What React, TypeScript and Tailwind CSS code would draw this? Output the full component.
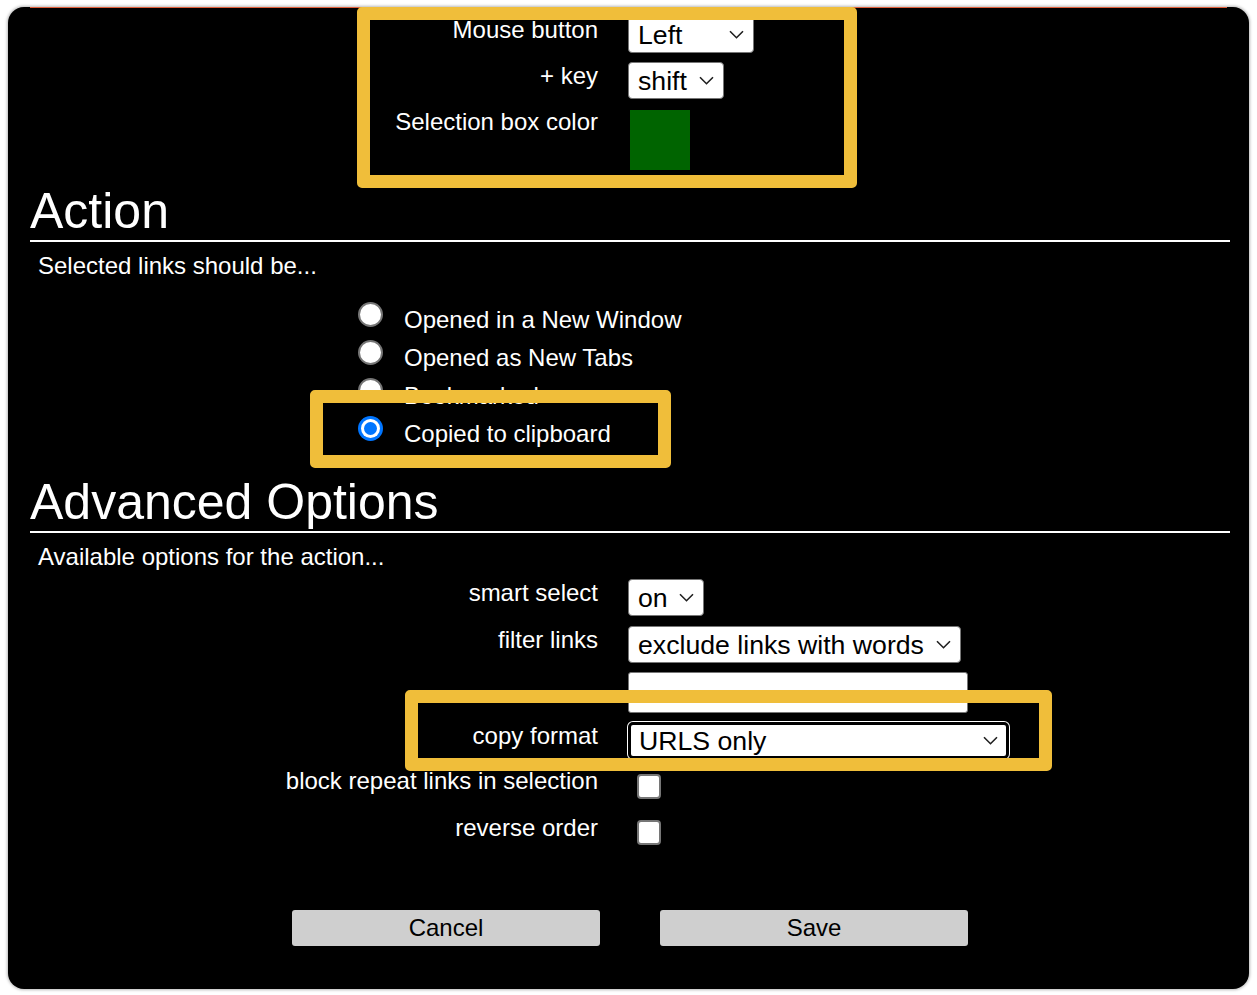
import React from "react";

// options page, dark theme, with the yellow callout boxes drawn over it

function Chevron() {
  return (
    <svg width="15" height="9" viewBox="0 0 15 9" fill="none" className="shrink-0">
      <path d="M1 1.2l6.5 6.5 6.5-6.5" stroke="#1f1f1f" strokeWidth="1.6" />
    </svg>
  );
}

function Select({
  value,
  className,
  focused = false,
}: {
  value: string;
  className: string;
  focused?: boolean;
}) {
  if (focused) {
    return (
      <div
        className={`flex h-[37px] items-center justify-between rounded-[5px] border-[3px] border-black bg-white pl-[8px] pr-[8px] text-[26.67px] leading-normal text-black ring-1 ring-white ${className}`}
      >
        <span>{value}</span>
        <Chevron />
      </div>
    );
  }
  return (
    <div
      className={`flex h-[37px] items-center justify-between gap-[6px] rounded-[4px] border border-[#767676] bg-white pl-[9px] pr-[9px] text-[26.67px] leading-normal text-black ${className}`}
    >
      <span className="whitespace-nowrap">{value}</span>
      <Chevron />
    </div>
  );
}

function Row({
  label,
  height,
  children,
}: {
  label: string;
  height: string;
  children: React.ReactNode;
}) {
  return (
    <div className={`flex items-start gap-[30px] ${height}`}>
      <div className="w-[568px] whitespace-nowrap text-right text-[24px] leading-[28px]">
        {label}
      </div>
      {children}
    </div>
  );
}

function Radio({ checked }: { checked: boolean }) {
  if (checked) {
    return (
      <span className="flex h-[25px] w-[25px] shrink-0 items-center justify-center rounded-full bg-[#0075ff]">
        <span className="flex h-[19px] w-[19px] items-center justify-center rounded-full bg-white">
          <span className="h-[13px] w-[13px] rounded-full bg-[#0075ff]" />
        </span>
      </span>
    );
  }
  return (
    <span className="block h-[25px] w-[25px] shrink-0 rounded-full border-2 border-[#767676] bg-white" />
  );
}

function Checkbox({ top }: { top: string }) {
  return (
    <span
      className={`ml-[9px] block h-[25px] w-[24px] rounded-[4px] border-2 border-[#767676] bg-white ${top}`}
    />
  );
}

const actions = [
  { label: "Opened in a New Window", checked: false },
  { label: "Opened as New Tabs", checked: false },
  { label: "Bookmarked", checked: false },
  { label: "Copied to clipboard", checked: true },
];

export default function App() {
  return (
    <div className="min-h-screen bg-white pl-[8px] pt-[7px] font-['Liberation_Sans',Arial,sans-serif]">
      <div className="relative h-[982px] w-[1241px] overflow-hidden rounded-[16px] bg-black text-white shadow-[0_0_3px_1px_rgba(0,0,0,0.28)]">
        <div className="mx-[22px] h-px bg-[#e2603c]" />

        <div className="pl-[22px] pr-[19px]">
          {/* Selection */}
          <div className="mt-[8px]">
            <Row label="Mouse button" height="h-[46px]">
              <Select value="Left" className="w-[126px]" />
            </Row>
            <Row label="+ key" height="h-[46px]">
              <Select value="shift" className="w-[96px]" />
            </Row>
            <Row label="Selection box color" height="h-[62px]">
              <div className="ml-[2px] mt-[2px] h-[60px] w-[60px] bg-[#006400]" />
            </Row>
          </div>

          {/* Action */}
          <h2 className="mt-[12px] border-b-2 border-white text-[50px] font-normal leading-[58px]">
            Action
          </h2>
          <p className="mt-[10px] pl-[8px] text-[24px] leading-[28px]">
            Selected links should be...
          </p>
          <div className="mt-[22px] pl-[328px]">
            {actions.map((a) => (
              <div key={a.label} className="flex h-[38px] items-start gap-[21px]">
                <Radio checked={a.checked} />
                <span className="mt-[4px] text-[24px] leading-[28px]">{a.label}</span>
              </div>
            ))}
          </div>

          {/* Advanced Options */}
          <h2 className="mt-[19px] border-b-2 border-white text-[50px] font-normal leading-[58px]">
            Advanced Options
          </h2>
          <p className="mt-[10px] pl-[8px] text-[24px] leading-[28px]">
            Available options for the action...
          </p>
          <div className="mt-[8px]">
            <Row label="smart select" height="h-[47px]">
              <Select value="on" className="w-[76px]" />
            </Row>
            <Row label="filter links" height="h-[46px]">
              <Select value="exclude links with words" className="w-[333px]" />
            </Row>
            <Row label="" height="h-[50px]">
              <div className="h-[41px] w-[340px] rounded-[3px] border border-[#767676] bg-white" />
            </Row>
            <Row label="copy format" height="h-[45px]">
              <Select value="URLS only" className="w-[381px]" focused />
            </Row>
            <Row label="block repeat links in selection" height="h-[47px]">
              <Checkbox top="mt-[7px]" />
            </Row>
            <Row label="reverse order" height="h-[32px]">
              <Checkbox top="mt-[6px]" />
            </Row>
          </div>

          <div className="mt-[64px] flex justify-center gap-[60px]">
            <button className="flex h-[36px] w-[308px] items-center justify-center rounded-[3px] bg-[#cfcfcf] text-[24px] text-black">
              Cancel
            </button>
            <button className="flex h-[36px] w-[308px] items-center justify-center rounded-[3px] bg-[#cfcfcf] text-[24px] text-black">
              Save
            </button>
          </div>
        </div>

        {/* callout boxes */}
        <div className="pointer-events-none absolute left-[349px] top-0 h-[181px] w-[500px] rounded-[5px] border-[13px] border-[#f0be3a]" />
        <div className="pointer-events-none absolute left-[302px] top-[383px] h-[78px] w-[361px] rounded-[5px] border-[13px] border-[#f0be3a]" />
        <div className="pointer-events-none absolute left-[397px] top-[683px] h-[81px] w-[647px] rounded-[5px] border-[13px] border-[#f0be3a]" />
      </div>
    </div>
  );
}
